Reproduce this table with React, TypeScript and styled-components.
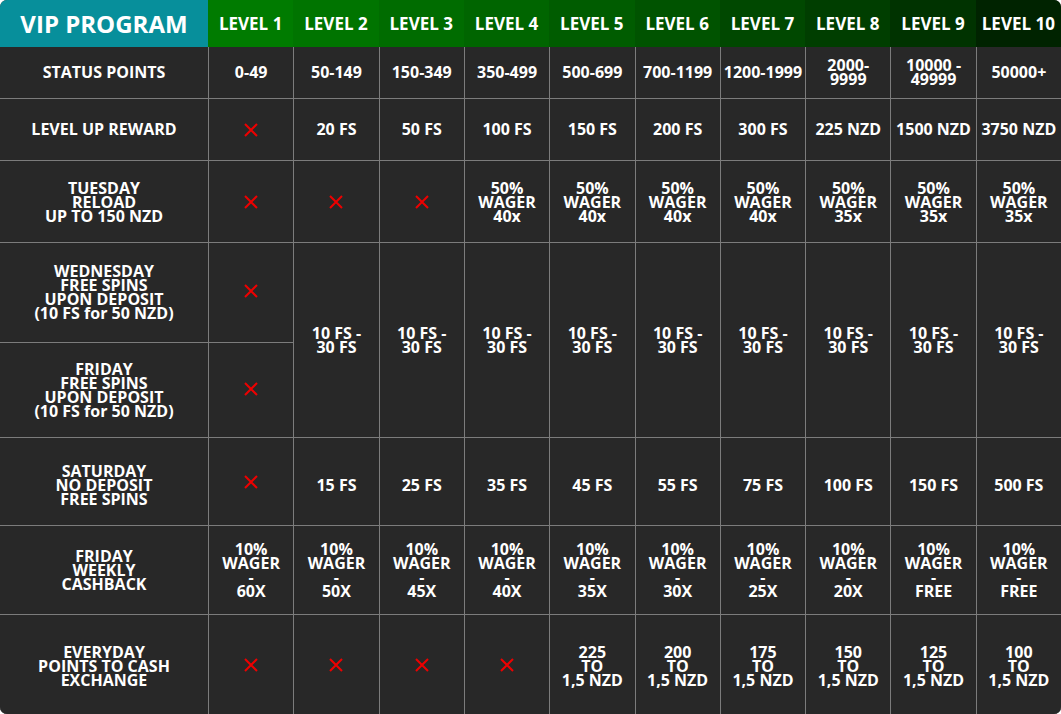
import React from "react";
import styled, { createGlobalStyle } from "styled-components";

const Global = createGlobalStyle`
  html, body { margin: 0; padding: 0; background: #ffffff; }
  body { font-family: "Open Sans", "Noto Sans", sans-serif; }
`;

const Table = styled.div`
  width: 1061px;
  height: 714px;
  border-radius: 7px;
  overflow: hidden;
  background: #282828;
  display: flex;
  flex-direction: column;
`;

const HeaderRow = styled.div`
  display: grid;
  grid-template-columns: 208px repeat(10, 1fr);
  height: 47px;
`;

const HeadCell = styled.div<{ $bg: string; $big?: boolean }>`
  background: ${(p) => p.$bg};
  color: #ffffff;
  font-weight: 700;
  font-size: ${(p) => (p.$big ? "24px" : "17px")};
  display: flex;
  align-items: center;
  justify-content: center;
  white-space: nowrap;
`;

const Body = styled.div`
  display: grid;
  grid-template-columns: 208px repeat(10, 1fr);
  grid-template-rows: 51px 61px 81px 99px 94px 87px 88px 99px;
  gap: 1px;
  background: #7c7c7c;
`;

const Cell = styled.div<{ $span?: number; $shift?: number }>`
  background: #282828;
  color: #ffffff;
  font-weight: 700;
  font-size: 16px;
  line-height: 14px;
  display: flex;
  align-items: center;
  justify-content: center;
  text-align: center;
  white-space: pre-line;
  box-sizing: border-box;
  padding-top: ${(p) => (p.$shift && p.$shift > 0 ? p.$shift * 2 : 0)}px;
  padding-bottom: ${(p) => (p.$shift && p.$shift < 0 ? -p.$shift * 2 : 0)}px;
  grid-row: ${(p) => (p.$span ? `span ${p.$span}` : "auto")};
`;

const CrossSvg = styled.svg`
  width: 14px;
  height: 14px;
  display: block;
`;

const Cross = () => (
  <CrossSvg viewBox="0 0 14 14">
    <path d="M1 1 L13 13 M13 1 L1 13" stroke="#ee0000" strokeWidth="2" fill="none" />
  </CrossSvg>
);

const levelColors = [
  "#007b00",
  "#007400",
  "#006c00",
  "#006500",
  "#005c00",
  "#005300",
  "#004800",
  "#003e00",
  "#003300",
  "#002300",
];

const X = "X";

type RowDef = { label: string; cells: string[]; shift?: number };

const rows: RowDef[] = [
  {
    label: "STATUS POINTS",
    cells: ["0-49", "50-149", "150-349", "350-499", "500-699", "700-1199", "1200-1999", "2000-\n9999", "10000 -\n49999", "50000+"],
    shift: -1,
  },
  {
    label: "LEVEL UP REWARD",
    cells: [X, "20 FS", "50 FS", "100 FS", "150 FS", "200 FS", "300 FS", "225 NZD", "1500 NZD", "3750 NZD"],
    shift: -1,
  },
  {
    label: "TUESDAY\nRELOAD\nUP TO 150 NZD",
    cells: [X, X, X, "50%\nWAGER\n40x", "50%\nWAGER\n40x", "50%\nWAGER\n40x", "50%\nWAGER\n40x", "50%\nWAGER\n35x", "50%\nWAGER\n35x", "50%\nWAGER\n35x"],
  },
];

const rowsAfter: RowDef[] = [
  {
    label: "SATURDAY\nNO DEPOSIT\nFREE SPINS",
    cells: [X, "15 FS", "25 FS", "35 FS", "45 FS", "55 FS", "75 FS", "100 FS", "150 FS", "500 FS"],
    shift: 3,
  },
  {
    label: "FRIDAY\nWEEKLY\nCASHBACK",
    cells: [
      "10%\nWAGER\n-\n60X",
      "10%\nWAGER\n-\n50X",
      "10%\nWAGER\n-\n45X",
      "10%\nWAGER\n-\n40X",
      "10%\nWAGER\n-\n35X",
      "10%\nWAGER\n-\n30X",
      "10%\nWAGER\n-\n25X",
      "10%\nWAGER\n-\n20X",
      "10%\nWAGER\n-\nFREE",
      "10%\nWAGER\n-\nFREE",
    ],
  },
  {
    label: "EVERYDAY\nPOINTS TO CASH\nEXCHANGE",
    cells: [X, X, X, X, "225\nTO\n1,5 NZD", "200\nTO\n1,5 NZD", "175\nTO\n1,5 NZD", "150\nTO\n1,5 NZD", "125\nTO\n1,5 NZD", "100\nTO\n1,5 NZD"],
    shift: 1,
  },
];

const renderVal = (v: string) => (v === X ? <Cross /> : v);

const renderRow = (r: RowDef, key: string) => (
  <React.Fragment key={key}>
    <Cell $shift={r.shift}>{r.label}</Cell>
    {r.cells.map((c, i) => (
      <Cell key={i} $shift={c === X ? 0 : r.shift}>
        {renderVal(c)}
      </Cell>
    ))}
  </React.Fragment>
);

export default function App() {
  return (
    <>
      <Global />
      <Table>
        <HeaderRow>
          <HeadCell $bg="#078f9b" $big>
            VIP PROGRAM
          </HeadCell>
          {levelColors.map((c, i) => (
            <HeadCell key={i} $bg={c}>
              LEVEL {i + 1}
            </HeadCell>
          ))}
        </HeaderRow>
        <Body>
          {rows.map((r, i) => renderRow(r, "a" + i))}
          <Cell $shift={-1}>{"WEDNESDAY\nFREE SPINS\nUPON DEPOSIT\n(10 FS for 50 NZD)"}</Cell>
          <Cell $shift={-2}>
            <Cross />
          </Cell>
          {Array.from({ length: 9 }).map((_, i) => (
            <Cell key={"s" + i} $span={2}>
              {"10 FS -\n30 FS"}
            </Cell>
          ))}
          <Cell>{"FRIDAY\nFREE SPINS\nUPON DEPOSIT\n(10 FS for 50 NZD)"}</Cell>
          <Cell $shift={-1}>
            <Cross />
          </Cell>
          {rowsAfter.map((r, i) => renderRow(r, "b" + i))}
        </Body>
      </Table>
    </>
  );
}
